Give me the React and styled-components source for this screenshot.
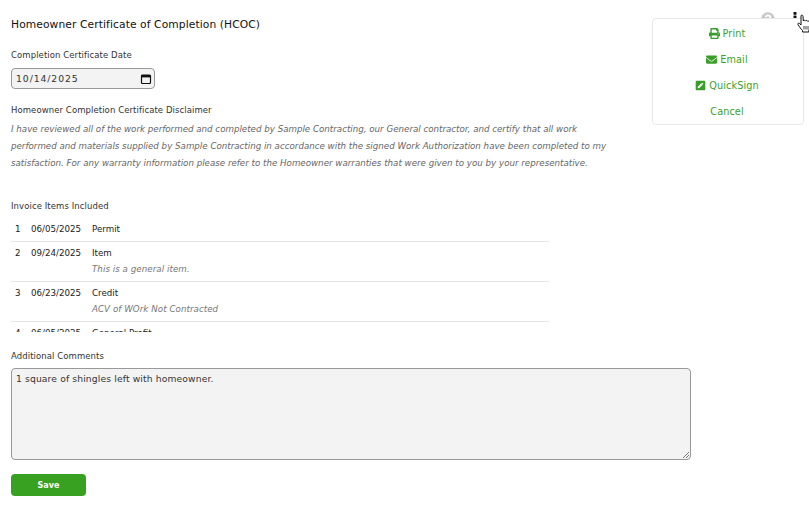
import React from "react";
import styled, { createGlobalStyle } from "styled-components";
import { FaPrint, FaEnvelope, FaPenSquare, FaQuestionCircle } from "react-icons/fa";

const Global = createGlobalStyle`
  html, body { margin: 0; padding: 0; background: #fff; }
  body { font-family: "DejaVu Sans", Verdana, sans-serif; color: #222; width: 809px; height: 512px; overflow: hidden; }
`;
const Page = styled.div`
  position: relative;
  width: 809px;
  height: 512px;
  padding: 18px 0 0 11px;
  box-sizing: border-box;
  display: flex;
  flex-direction: column;
  align-items: flex-start;
`;
const Title = styled.h1`
  margin: 0;
  font-size: 10.7px;
  line-height: 14px;
  font-weight: 400;
  color: #111;
  letter-spacing: 0.1px;
`;
const Label = styled.div`
  font-size: 8.5px;
  line-height: 12px;
  color: #333;
  letter-spacing: 0.08px;
  margin-top: ${p => p.$top}px;
`;
const DateBox = styled.div`
  margin-top: 7px;
  width: 144px;
  height: 21px;
  box-sizing: border-box;
  border: 1px solid #999;
  border-radius: 4px;
  background: #f3f3f3;
  padding: 0 2px 0 4px;
  display: flex;
  align-items: center;
  justify-content: space-between;
  font-size: 9.3px;
  letter-spacing: 0.9px;
  color: #333;
`;
const Disclaimer = styled.p`
  margin: 5px 0 0;
  width: 610px;
  font-size: 8.7px;
  line-height: 17px;
  font-style: italic;
  color: #666;
`;
const ItemsClip = styled.div`
  margin-top: 6px;
  width: 538px;
  height: 114px;
  overflow: hidden;
`;
const Row = styled.div`
  display: grid;
  grid-template-columns: 16px 61px 1fr;
  height: 40px;
  box-sizing: border-box;
  border-bottom: 1px solid #e6e6ea;
  padding: 3px 0 0 4px;
  font-size: 8.7px;
  color: #222;
  line-height: 16px;
  &:first-child { height: 24px; }
`;
const Name = styled.div`
  display: flex;
  flex-direction: column;
`;
const Note = styled.span`
  font-style: italic;
  color: #777;
  letter-spacing: 0.05px;
`;
const Comments = styled.div`
  margin-top: 6px;
  position: relative;
  width: 680px;
  height: 92px;
  box-sizing: border-box;
  border: 1px solid #999;
  border-radius: 4px;
  background: #f3f3f3;
  padding: 3px 4px;
  font-size: 9.2px;
  line-height: 13px;
  letter-spacing: 0.13px;
  color: #333;
`;
const Grip = styled.svg`
  position: absolute;
  right: 0;
  bottom: 0;
  width: 9px;
  height: 9px;
`;
const SaveButton = styled.button`
  margin-top: 14px;
  width: 75px;
  height: 22px;
  border: 0;
  border-radius: 4px;
  background: #38a121;
  color: #fff;
  font: 700 8px "DejaVu Sans", sans-serif;
  padding: 0;
`;
const HelpIcon = styled.div`
  position: absolute;
  left: 761px;
  top: 12px;
  color: #c8c8c8;
  font-size: 14px;
  line-height: 0;
`;
const Kebab = styled.svg`
  position: absolute;
  left: 792.500px;
  top: 12px;
  width: 4px;
  height: 12px;
`;
const Menu = styled.div`
  position: absolute;
  left: 652px;
  top: 18px;
  width: 152px;
  height: 107px;
  box-sizing: border-box;
  border: 1px solid #e8e8e8;
  border-radius: 4px;
  background: #fff;
  display: flex;
  flex-direction: column;
  align-items: center;
  padding: 1px 2px 0 0;
`;
const MenuItem = styled.div`
  height: 26.3px;
  display: flex;
  align-items: center;
  gap: 3px;
  color: #3a9f2a;
  font-size: 9.7px;
  letter-spacing: 0.1px;
  svg { font-size: 11px; }
`;
const Cursor = styled.svg`
  position: absolute;
  left: 797px;
  top: 14px;
  width: 14px;
  height: 19px;
`;

const items = [
  ["1", "06/05/2025", "Permit"],
  ["2", "09/24/2025", "Item", "This is a general item."],
  ["3", "06/23/2025", "Credit", "ACV of WOrk Not Contracted"],
  ["4", "06/05/2025", "General Profit"],
];

export default function App() {
  return (
    <Page>
      <Global />
      <Title>Homeowner Certificate of Completion (HCOC)</Title>
      <Label $top={17}>Completion Certificate Date</Label>
      <DateBox>
        <span>10/14/2025</span>
        <svg width="12" height="12" viewBox="0 0 12 12">
          <rect x="1.500" y="2" width="9" height="8.500" rx="1" fill="none" stroke="#111" strokeWidth="1.200" />
          <rect x="1.500" y="2" width="9" height="2.400" fill="#111" />
        </svg>
      </DateBox>
      <Label $top={15}>Homeowner Completion Certificate Disclaimer</Label>
      <Disclaimer>
        I have reviewed all of the work performed and completed by Sample Contracting, our General contractor, and certify that all work performed and materials supplied by Sample Contracting in accordance with the signed Work Authorization have been completed to my satisfaction. For any warranty information please refer to the Homeowner warranties that were given to you by your representative.
      </Disclaimer>
      <Label $top={28}>Invoice Items Included</Label>
      <ItemsClip>
        {items.map(([n, d, name, note]) => (
          <Row key={n}>
            <span>{n}</span>
            <span>{d}</span>
            <Name>
              <span>{name}</span>
              {note && <Note>{note}</Note>}
            </Name>
          </Row>
        ))}
      </ItemsClip>
      <Label $top={18}>Additional Comments</Label>
      <Comments>
        1 square of shingles left with homeowner.
        <Grip viewBox="0 0 9 9">
          <path d="M8 2L2 8M8 5L5 8" stroke="#777" strokeWidth="1" fill="none" />
        </Grip>
      </Comments>
      <SaveButton>Save</SaveButton>
      <HelpIcon><FaQuestionCircle /></HelpIcon>
      <Kebab viewBox="0 0 4 12">
        <rect x="0.500" y="0" width="3" height="2.800" rx="0.600" fill="#111" />
        <rect x="0.500" y="3.400" width="3" height="2.800" rx="0.600" fill="#111" />
      </Kebab>
      <Menu>
        <MenuItem><FaPrint />Print</MenuItem>
        <MenuItem><FaEnvelope />Email</MenuItem>
        <MenuItem><FaPenSquare />QuickSign</MenuItem>
        <MenuItem>Cancel</MenuItem>
      </Menu>
      <Cursor viewBox="0 0 14 19">
        <path d="M4 1.500c.8-.7 1.900-.3 2 .8L6.300 7c.2-1 2-1 2.300.1.300-.9 1.900-.8 2.200.3.500-.6 1.900-.3 2 .9l.2 4c0 2-.6 3-1.200 4.200v1.500H5.500V16.500C4 15 2.500 13 1 10.500c-.5-1 .6-1.900 1.500-1.100L4 11Z" fill="#fff" stroke="#111" strokeWidth="1" strokeLinejoin="round" />
        <path d="M7 12v3.500M9 12v3.500M11 12v3.500" stroke="#111" strokeWidth=".8" />
      </Cursor>
    </Page>
  );
}
